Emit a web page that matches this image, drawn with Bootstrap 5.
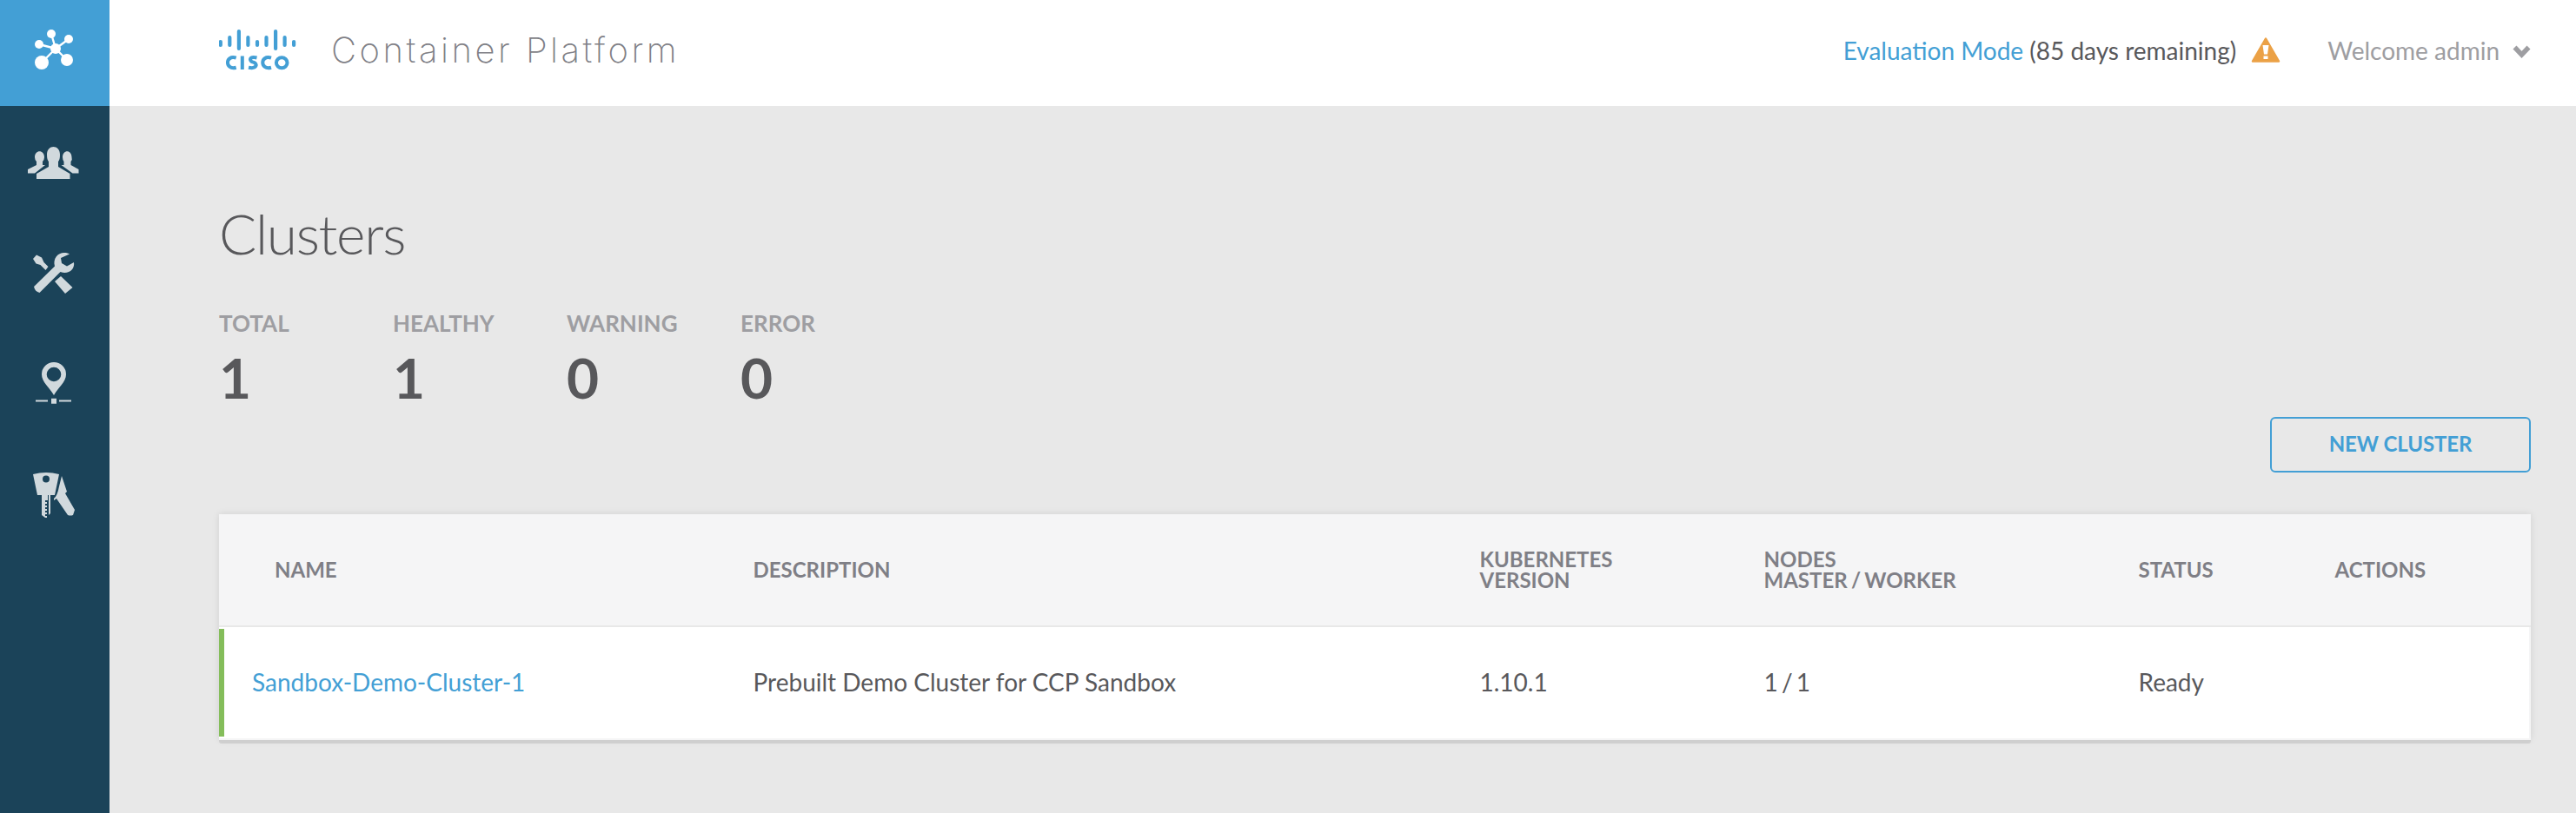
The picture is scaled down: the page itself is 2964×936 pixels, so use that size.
<!DOCTYPE html>
<html lang="en">
<head>
<meta charset="utf-8">
<title>Clusters</title>
<link href="https://cdn.jsdelivr.net/npm/bootstrap@5.3.0/dist/css/bootstrap.min.css" rel="stylesheet">
<style>
body{font-family:Lato,sans-serif;background:#e8e8e8;color:#58585b;height:936px;overflow:hidden;font-size:28px;line-height:36px}
.side{width:126px;background:#1b4359;color:#d1d9dd}
.side a{display:block;height:127px;color:inherit}
.side a.active{height:122px;background:#439fd5;color:#fff}
.side svg{display:block}
.topbar{height:122px;background:#fff;padding:0 52px 0 126px}
.brand-name{font-family:Inter,sans-serif;font-weight:200;font-size:40px;letter-spacing:3.5px;color:#7f7f86;margin-left:39px;padding-bottom:6px}
.link-blue{color:#439fd5;text-decoration:none}
.muted{color:#9e9ea2;margin-left:54px}
.toptext{padding-bottom:6px}
.warn{margin-left:17px}
.chev{margin-left:15px}
.main{padding:112px 52px 0 126px}
h1{font-weight:300;font-size:64px;line-height:70px;margin:0;letter-spacing:-1.3px}
.stats{margin-top:50px}
.stat{width:200px}
.stat dt{font-size:26px;line-height:36px;color:#9e9ea2;font-weight:700}
.stat dd{font-size:64px;line-height:60px;font-weight:700;margin:15px 0 0}
.actions{margin-top:15px}
.btn-new{width:300px;height:64px;border:2px solid #439fd5;border-radius:6px;color:#439fd5;font-size:24px;font-weight:700;padding:0 0 2px;letter-spacing:-.1px}
.panel{margin-top:48px;background:#fff;box-shadow:0 4px 0 #cfcfcf,0 0 8px rgba(0,0,0,.1);border-radius:0 0 3px 3px}
.grid-row{display:grid;grid-template-columns:614.500px 836px 327px 431px 226px 1fr}
.head{height:130px;background:#f5f5f6;border-bottom:2px solid #e8e8e8;color:#7f7f86;font-weight:700;font-size:24px;line-height:24px;align-items:center}
.data{height:130px;align-items:center;border:solid #f5f5f6;border-width:0 2px 2px 0}
.data>div{padding-bottom:2px}
.data>.name-cell{height:124px;border-left:6px solid #84bd5a;padding:43px 0 0 32px}
.tight{word-spacing:-1.5px}
.tighter{word-spacing:-3px}
</style>
</head>
<body class="d-flex">
<nav class="side flex-shrink-0">
<a href="#" class="active" aria-label="Clusters"><svg width="126" height="122" viewBox="0 0 126 122" fill="currentColor"><path d="M64 56L59 39M64 56L79 45M64 56L45 51M64 56L48 72M64 56L77 69" stroke="currentColor" stroke-width="2.400"/><circle cx="64" cy="56" r="6"/><circle cx="59" cy="39" r="5"/><circle cx="79" cy="45" r="5"/><circle cx="45" cy="51" r="5"/><circle cx="48" cy="72" r="8"/><circle cx="77" cy="69" r="7"/></svg></a>
<a href="#" aria-label="Users"><svg width="126" height="127" viewBox="0 122 126 127" fill="currentColor"><path d="M42 206v-6l14-8v-6q-2-2-2-8c0-12 15-12 15 0q0 6-2 8v6l13.500 8v6z"/><path d="M32 199.500v-4.500l10-5v-4q-2-2-2-5c0-9 11-9 11 0q0 3-2 5v4h3l-12 9.500zM90.500 199.500v-4.500l-9-5v-4q2-2 1-5c0-9-10.500-9-10.500 0q0 3 1.500 5v4h-3l13 9.500z"/></svg></a>
<a href="#" aria-label="Tools"><svg width="126" height="127" viewBox="0 249 126 127" fill="currentColor"><path d="M38 298l4-4.500 6 3 2.500 5.500 5 5-3 4-6-6-5-1.500zM63 324l7-6 13.500 13-8.500 7zM80 292.500c-10-5-20 3-17 14L39 330c1 4 3 6 6.500 7L69.500 313c9 3.500 17-3 15.500-11l-8 4.500-6-3.500-1-6z"/></svg></a>
<a href="#" aria-label="Network"><svg width="126" height="127" viewBox="0 376 126 127" fill="currentColor"><path fill-rule="evenodd" d="M62 455C57 446 48 440 48 431a14 14 0 0 1 28 0c0 9-9 15-14 24zM62 422.700a8.300 8.300 0 1 0 0 16.600a8.300 8.300 0 0 0 0-16.600z"/><path d="M41 460.500h14v2H41zM59 458.700h6v6h-6zM68 460.500h14v2H68z"/></svg></a>
<a href="#" aria-label="Keys"><svg width="126" height="127" viewBox="0 503 126 127" fill="currentColor"><path fill-rule="evenodd" d="M38 546q15-4 30 0l-5 24H43zM53 547.500a4 4 0 1 0 0 8a4 4 0 0 0 0-8z"/><path d="M48 569h7v7h-3v2h2v2h-2v2h2v2h-2v2h2v2h-2v2h2v2h-2v2h2v2h-2l-4-3zM56 569h2v22l-2 2z"/><path d="M71 548l6 18-2 2 11 19-2 6q-3 1-6 0L65 574l-3 2v-2q4-3 6-14z"/></svg></a>
</nav>
<div class="flex-grow-1">
<header class="topbar d-flex align-items-center">
<svg class="flex-shrink-0" width="90" height="122" viewBox="252 0 90 122" role="img" aria-label="Cisco"><path d="M253.800 48v4M264.300 43v9M274.900 36v20M285.400 43v9M296 48v4M306.500 43v9M317.100 36v20M327.600 43v9M338.100 48v4" stroke="#439fd5" stroke-width="4.200" stroke-linecap="round"/><g fill="none" stroke="#439fd5" stroke-width="4"><path d="M271.700 66.700c-13-4-13 14.600 0 11M278.800 64.500v15.500M295.500 66.500c-9-2-9.500 3.500-4 5.200s4 8-5.500 6M312 66.700c-13-4-13 14.600 0 11"/><ellipse cx="324.200" cy="72.200" rx="6.300" ry="6"/></g></svg>
<span class="brand-name">Container Platform</span>
<div class="ms-auto d-flex align-items-center">
<span class="toptext"><a href="#" class="link-blue">Evaluation Mode</a> (85 days remaining)</span>
<svg class="warn" width="34" height="40" viewBox="0 0 34 40"><path d="M17 2.500l15 26H2z" transform="translate(0 1)" fill="#eba146" stroke="#eba146" stroke-width="2.500" stroke-linejoin="round"/><path d="M13.500 11h7l-1.500 10.500h-4zM14.500 23.500h5v3.500h-5z" fill="#fff"/></svg>
<span class="muted toptext">Welcome admin</span>
<svg class="chev" width="21" height="20" viewBox="0 0 21 20"><path d="M2.500 3.500l8 8.500 8-8.500" fill="none" stroke="#9e9ea2" stroke-width="5.500"/></svg>
</div>
</header>
<main class="main">
<h1>Clusters</h1>
<dl class="stats d-flex mb-0">
<div class="stat"><dt>TOTAL</dt><dd>1</dd></div><div class="stat"><dt>HEALTHY</dt><dd>1</dd></div><div class="stat"><dt>WARNING</dt><dd>0</dd></div><div class="stat"><dt>ERROR</dt><dd>0</dd></div>
</dl>
<div class="actions d-flex justify-content-end"><button class="btn btn-new">NEW CLUSTER</button></div>
<section class="panel">
<div class="grid-row head"><div class="ps-5 ms-3">NAME</div><div>DESCRIPTION</div><div>KUBERNETES<br>VERSION</div><div class="tight">NODES<br>MASTER / WORKER</div><div>STATUS</div><div>ACTIONS</div></div>
<div class="grid-row data"><div class="name-cell"><a href="#" class="link-blue">Sandbox-Demo-Cluster-1</a></div><div>Prebuilt Demo Cluster for CCP Sandbox</div><div>1.10.1</div><div class="tighter">1 / 1</div><div>Ready</div><div></div></div>
</section>
</main>
</div>
<script src="https://cdn.jsdelivr.net/npm/bootstrap@5.3.0/dist/js/bootstrap.bundle.min.js"></script>
</body>
</html>
